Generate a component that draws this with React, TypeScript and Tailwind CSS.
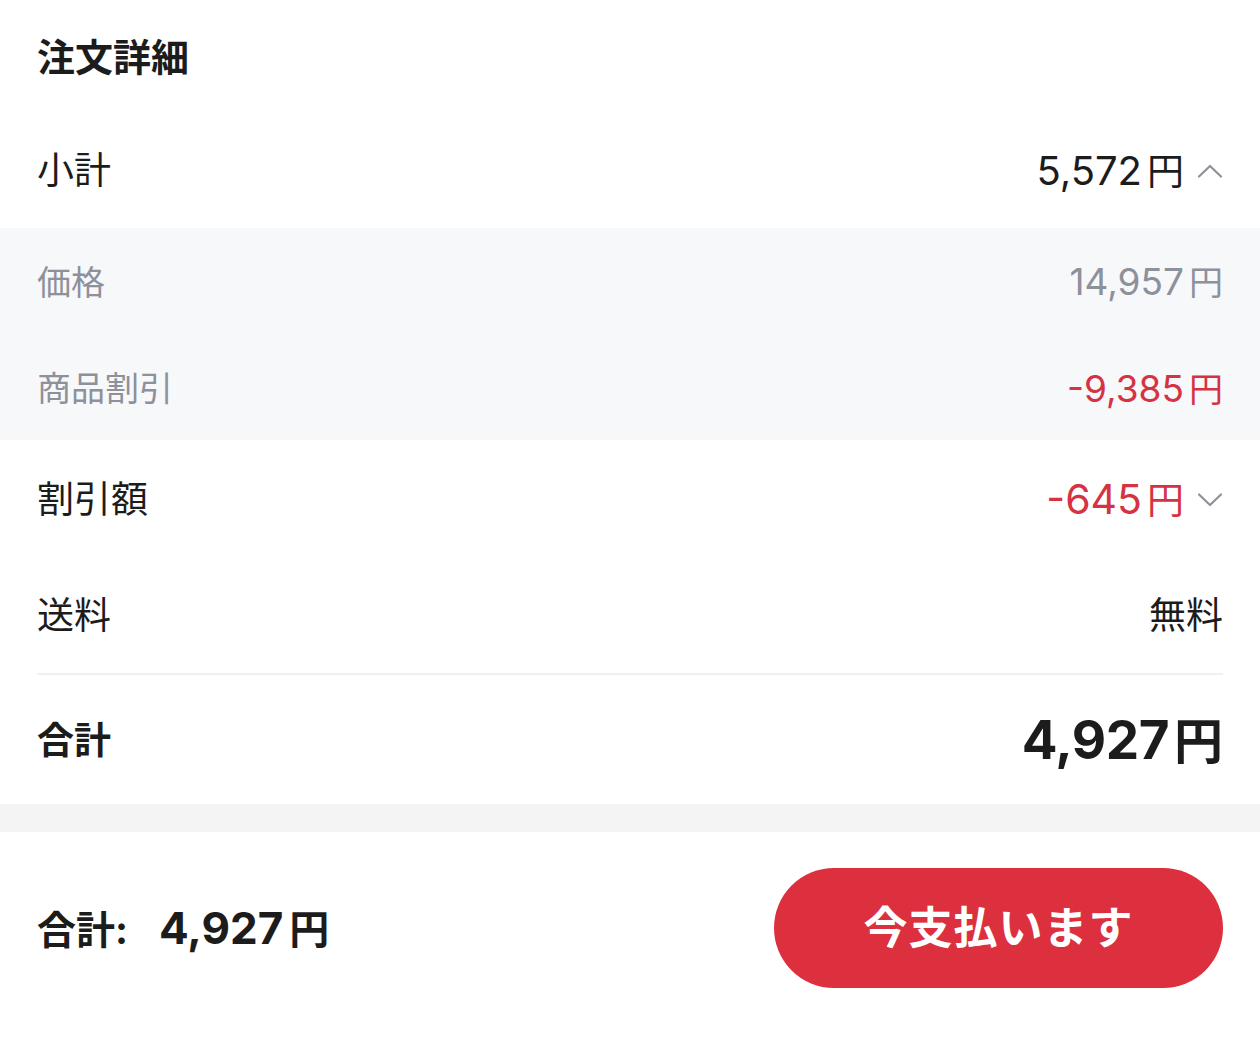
const font = { fontFamily: 'Inter, "Noto Sans CJK JP", sans-serif' };

function Chevron({ up }: { up?: boolean }) {
  return (
    <svg width="26" height="16" viewBox="0 0 26 16" className="text-[#8e909a]">
      <polyline
        points={up ? "2,13.5 13,3 24,13.5" : "2,2.5 13,13 24,2.5"}
        fill="none"
        stroke="currentColor"
        strokeWidth="2.2"
        strokeLinecap="round"
        strokeLinejoin="round"
      />
    </svg>
  );
}

function Amount({
  value,
  numClass,
  yenClass,
}: {
  value: string;
  numClass: string;
  yenClass: string;
}) {
  return (
    <span className="flex items-baseline">
      <span className={numClass}>{value}</span>
      <span className={`ml-[5px] ${yenClass}`}>円</span>
    </span>
  );
}

function Row({
  label,
  value,
  className = "",
  children,
}: {
  label: React.ReactNode;
  value: React.ReactNode;
  className?: string;
  children?: React.ReactNode;
}) {
  return (
    <div className={`flex items-center justify-between ${className}`}>
      <span>{label}</span>
      <div className="flex items-center gap-[13px]">
        {value}
        {children}
      </div>
    </div>
  );
}

export default function App() {
  return (
    <div
      className="w-[1260px] h-[1052px] bg-white text-[#1c1c1c] flex flex-col"
      style={font}
    >
      <div className="px-[37px]">
        <div className="h-[114px] flex items-center text-[38px] font-bold">
          注文詳細
        </div>
        <Row
          label="小計"
          value={<Amount value="5,572" numClass="text-[40px]" yenClass="text-[37px]" />}
          className="h-[114px] text-[37px]"
        >
          <Chevron up />
        </Row>
      </div>

      <div className="bg-[#f7f8fa] px-[37px] text-[34px] text-[#8e909a]">
        <Row
          label="価格"
          value={<Amount value="14,957" numClass="text-[37px]" yenClass="text-[34px]" />}
          className="h-[106px] pt-[2px]"
        />
        <Row
          label="商品割引"
          value={
            <span className="text-[#d53343]">
              <Amount value="-9,385" numClass="text-[37px]" yenClass="text-[34px]" />
            </span>
          }
          className="h-[106px] pt-[3px]"
        />
      </div>

      <div className="px-[37px]">
        <Row
          label="割引額"
          value={
            <span className="text-[#d53343]">
              <Amount value="-645" numClass="text-[41px]" yenClass="text-[37px]" />
            </span>
          }
          className="h-[116px] text-[37px] pt-[4px]"
        >
          <Chevron />
        </Row>
        <Row
          label="送料"
          value={<span>無料</span>}
          className="h-[117px] text-[37px] pt-[2px]"
        />
        <div className="h-[2px] bg-[#f0f0f0]" />
        <Row
          label={<span className="font-bold">合計</span>}
          value={
            <span className="font-bold">
              <Amount value="4,927" numClass="text-[53px] tracking-[-0.5px]" yenClass="text-[49px]" />
            </span>
          }
          className="h-[129px] text-[37px] pt-[2px]"
        />
      </div>

      <div className="h-[28px] bg-[#f4f4f4]" />

      <div className="flex-1 px-[37px] pt-[36px]">
        <div className="h-[120px] flex items-center justify-between">
          <span className="flex items-baseline font-bold">
            <span className="text-[39px]">合計:</span>
            <span className="text-[44px] ml-[31px]">4,927</span>
            <span className="text-[40px] ml-[6px]">円</span>
          </span>
          <button className="w-[449px] h-[120px] rounded-full bg-[#dc303f] text-white text-[44px] font-bold tracking-[1px]">
            今支払います
          </button>
        </div>
      </div>
    </div>
  );
}
